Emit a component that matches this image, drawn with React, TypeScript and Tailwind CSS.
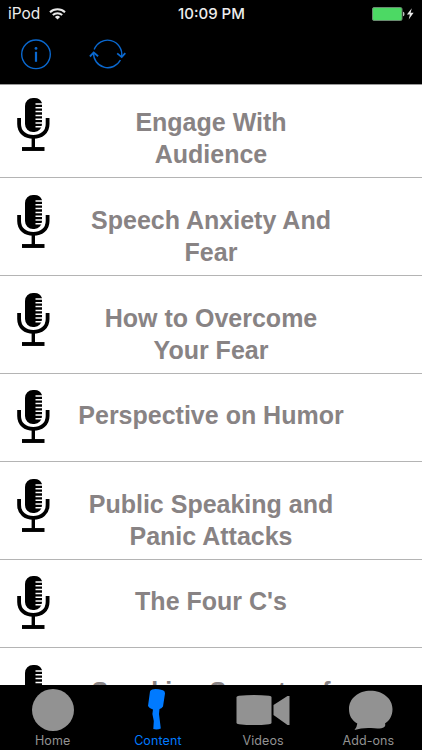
const topics = [
  { title: "Engage With\nAudience", row: "h-[93px] pt-[22px]", icon: "-mt-[9px]" },
  { title: "Speech Anxiety And\nFear", row: "h-[98px] pt-[27px]", icon: "-mt-[10px]" },
  { title: "How to Overcome\nYour Fear", row: "h-[98px] pt-[27px]", icon: "-mt-[10px]" },
  { title: "Perspective on Humor", row: "h-[87.5px] pt-[26px]", icon: "-mt-[10px]" },
  { title: "Public Speaking and\nPanic Attacks", row: "h-[98px] pt-[27.5px]", icon: "-mt-[10.5px]" },
  { title: "The Four C's", row: "h-[88px] pt-[26.5px]", icon: "-mt-[10px]" },
  { title: "Speaking Secrets of", row: "h-[88px] pt-[28px]", icon: "-mt-[11px]" },
];

function WifiIcon() {
  return (
    <svg width="17" height="12" viewBox="0 0 17 12" fill="none" stroke="#e8e8e8" strokeWidth="2">
      <path d="M1 4.2C5 .2 12 .2 16 4.2" />
      <path d="M3.8 7C6.4 4.5 10.6 4.5 13.2 7" />
      <path d="M8.5 11.6 5.9 9a3.7 3.7 0 0 1 5.2 0z" fill="#e8e8e8" stroke="none" />
    </svg>
  );
}

function BatteryIcon() {
  return (
    <svg width="43" height="14" viewBox="0 0 43 14">
      <rect x=".5" y=".5" width="29.5" height="13" rx="1.5" fill="#4cd964" stroke="#6a8a70" />
      <path d="M31.2 4.8c1.6.3 1.6 4.1 0 4.4z" fill="#e8e8e8" />
      <path d="M39.8 1.2 34.9 7.4h3L36.7 12.4l4.9-6.6h-3z" fill="#e8e8e8" />
    </svg>
  );
}

function InfoIcon() {
  return (
    <svg width="32" height="32" viewBox="0 0 32 32" fill="none" stroke="#0a68cf" strokeWidth="1.4">
      <circle cx="16" cy="16.3" r="14.3" />
      <path d="M16 13.8v10" strokeWidth="2.2" />
      <circle cx="16" cy="10.4" r="1.4" fill="#0a68cf" stroke="none" />
    </svg>
  );
}

function RefreshIcon() {
  return (
    <svg width="38" height="32" viewBox="0 0 38 32" fill="none" stroke="#0a68cf" strokeWidth="1.4">
      <path d="M5.2 11.6A14.2 14.2 0 0 1 32.6 18.6" />
      <path d="M31.4 22A14.2 14.2 0 0 1 4.6 14.6" />
      <path d="M.9 18.5 4.7 14.6l4.4 3.7" strokeWidth="1.8" />
      <path d="M28.200 15.400 32.700 19.100l3.600-4" strokeWidth="1.8" />
    </svg>
  );
}

function MicIcon() {
  return (
    <svg width="34" height="54" viewBox="0 0 34 54" fill="none">
      <path d="M9 8a8 8 0 0 1 8-8h1.5a8 8 0 0 1 7.500 5V26a8 8 0 0 1-7.500 8H17a8 8 0 0 1-8-8z" fill="#000" />
      <path d="M19.500 6h7M19.500 9.800h7M19.500 13.600h7M19.500 17.400h7M19.500 21.200h7M19.500 25h7M19.500 28.800h7" stroke="#fff" strokeWidth="1.500" />
      <path d="M3.100 20v6c0 8.300 6.200 12.900 14.200 12.900S31.600 34.300 31.600 26v-6" stroke="#000" strokeWidth="3.800" />
      <path d="M17.300 39v12" stroke="#000" strokeWidth="3.400" />
      <path d="M6 51h22.500" stroke="#000" strokeWidth="3.900" />
    </svg>
  );
}

const tabs = [
  {
    label: "Home",
    color: "text-[#929292]",
    icon: <circle cx="27" cy="22" r="21" />,
  },
  {
    label: "Content",
    color: "text-[#007aff]",
    icon: <path d="M19 3.500Q19.500 1.800 21.300 1.400Q25.500 .5 32 2.300Q34.200 3.200 34 5.500L32 18.500Q30.500 20.600 28.500 21L28 26l1.800 14.500Q26 42 22.300 41L22.800 33l-1.400-7 .6-4.500Q18 20.300 17 18z" />,
  },
  {
    label: "Videos",
    color: "text-[#929292]",
    icon: <path d="M.5 9Q1 8 3 7.800Q18 6 33 7.800Q35.500 8 35.500 9v26Q35.500 36 33 36.200Q18 38 3 36.200Q.5 36 .5 35zM37.500 17 51.500 8h2v29h-2L37.500 27z" />,
  },
  {
    label: "Add-ons",
    color: "text-[#929292]",
    icon: <path d="M29.500 2.800C41.500 2.800 51.500 10.500 51.500 21c0 7-3 11.500-7.500 14.500 1.500 4-3 6-14 4.500q-9-.5-16.500 2 2.500-3 2.800-6.500C10.500 32 8 27.500 8 21 8 10.500 17.500 2.800 29.500 2.800z" />,
  },
];

export default function App() {
  return (
    <div className="flex h-[750px] w-[422px] flex-col overflow-hidden bg-black font-['Liberation_Sans',Arial,sans-serif]">
      <header className="h-[84px] shrink-0 bg-black">
        {/* Status bar */}
        <div className="grid h-7 grid-cols-3 items-center pr-[7px] pl-2 text-[#ededed]">
          <div className="flex items-center gap-[9px] text-[15.5px]">
            <span className="font-['Inter',sans-serif]">iPod</span>
            <WifiIcon />
          </div>
          <span className="text-center font-['Inter',sans-serif] text-[15px] font-medium whitespace-nowrap">10:09 PM</span>
          <div className="flex justify-end">
            <BatteryIcon />
          </div>
        </div>
        <div className="flex gap-[37px] pt-[10px] pl-5">
          <InfoIcon />
          <RefreshIcon />
        </div>
      </header>

      <main className="min-h-0 flex-1 overflow-hidden border-t border-[#999] bg-white">
        {topics.map((topic) => (
          <div
            key={topic.title}
            className={`flex items-start border-b border-[#b4b4b4] pl-4 ${topic.row}`}
          >
            <div className={topic.icon}>
              <MicIcon />
            </div>
            <h2 className="w-[322px] text-center text-[25px] leading-[31.5px] font-bold whitespace-pre-line text-[#888384]">
              {topic.title}
            </h2>
          </div>
        ))}
      </main>

      <nav className="grid h-[65px] w-[421px] shrink-0 grid-cols-4 bg-black">
        {tabs.map((tab) => (
          <button key={tab.label} className={`flex flex-col items-center pt-[3px] ${tab.color}`}>
            <svg width="54" height="44" viewBox="0 0 54 44" fill="currentColor">
              {tab.icon}
            </svg>
            <span className="pt-[2px] font-['Inter',sans-serif] text-[12.500px] leading-[14px] tracking-[0.1px]">{tab.label}</span>
          </button>
        ))}
      </nav>
    </div>
  );
}
